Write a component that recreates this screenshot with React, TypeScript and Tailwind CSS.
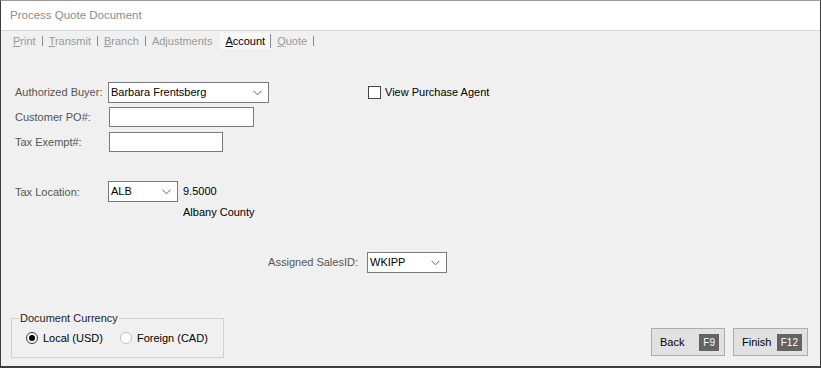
import React from "react";

const tabs = [
  { key: "P", rest: "rint", sep: true },
  { key: "T", rest: "ransmit", sep: true },
  { key: "B", rest: "ranch", sep: true },
  { key: "", rest: "Adjustments", sep: false },
];

function Chevron() {
  return (
    <svg width="9" height="6" viewBox="0 0 9 6" fill="none" className="shrink-0">
      <path d="M0.5 0.8 L4.5 4.8 L8.5 0.8" stroke="#606060" strokeWidth="1" />
    </svg>
  );
}

function Combo({ value, width }: { value: string; width: string }) {
  return (
    <div
      className={`flex h-[21px] items-center justify-between border border-[#7a7a7a] bg-white pl-[2px] pr-[6px] text-black ${width}`}
    >
      <span>{value}</span>
      <Chevron />
    </div>
  );
}

function FKey({ label }: { label: string }) {
  return (
    <span className="flex h-[17px] items-center bg-[#636363] px-[4px] text-[10px] text-white">
      {label}
    </span>
  );
}

export default function App() {
  return (
    <div className="flex h-[368px] w-[821px] flex-col border-x border-t border-b-2 border-x-[#3c3c3c] border-t-[#9a9a9a] border-b-[#3c3c3c] bg-[#f0f0f0] font-['Liberation_Sans',Arial,sans-serif] text-[11px] text-[#555]">
      {/* Title */}
      <div className="flex h-[30px] items-center border-b border-[#d4d4d4] bg-white pl-[9px] pt-[1px] text-[11.5px] text-[#8c8c8c]">
        Process Quote Document
      </div>

      {/* Tabs */}
      <div className="flex h-[18px] items-center pl-[12px] pt-[2px] text-[11px] text-[#9a9a9a]">
        {tabs.map((t) => (
          <div key={t.rest} className="flex items-center">
            <span>
              <span className="underline">{t.key}</span>
              {t.rest}
            </span>
            {t.sep && <span className="mx-[6px] h-[10px] w-px bg-[#8a8a8a]" />}
          </div>
        ))}
        <div className="ml-[8px] flex h-full items-center bg-[#f8f8f8] px-[5px] text-black">
          <span className="underline">A</span>ccount
        </div>
        <span className="mr-[6px] h-[14px] w-px bg-[#8a8a8a]" />
        <span>
          <span className="underline">Q</span>uote
        </span>
        <span className="ml-[6px] h-[10px] w-px bg-[#8a8a8a]" />
      </div>

      {/* Body */}
      <div className="flex flex-1 flex-col pl-[14px] pr-[12px] pb-[8px]">
        <div className="mt-[33px] flex items-center">
          <span className="w-[93px]">Authorized Buyer:</span>
          <Combo value="Barbara Frentsberg" width="w-[161px]" />
          <div className="ml-[99px] flex items-center gap-[4px] text-black">
            <span className="h-[13px] w-[13px] border border-[#444] bg-white" />
            <span>View Purchase Agent</span>
          </div>
        </div>

        <div className="mt-[4px] flex items-center">
          <span className="w-[94px]">Customer PO#:</span>
          <div className="h-[20px] w-[145px] border border-[#7a7a7a] bg-white" />
        </div>

        <div className="mt-[5px] flex items-center">
          <span className="w-[94px]">Tax Exempt#:</span>
          <div className="h-[20px] w-[114px] border border-[#7a7a7a] bg-white" />
        </div>

        <div className="mt-[29px] flex items-start">
          <span className="mt-[3px] w-[93px]">Tax Location:</span>
          <Combo value="ALB" width="w-[70px]" />
          <div className="ml-[5px] mt-[2px] flex flex-col gap-[4px] text-black">
            <span>9.5000</span>
            <span>Albany County</span>
          </div>
        </div>

        <div className="mt-[32px] flex items-center">
          <span className="w-[352px] pr-[9px] text-right">Assigned SalesID:</span>
          <Combo value="WKIPP" width="w-[80px]" />
        </div>

        {/* Bottom */}
        <div className="mt-auto flex items-end justify-between">
          <fieldset className="-ml-[4px] h-[48px] w-[213px] border border-[#d0d0d0] px-[14px]">
            <legend className="ml-[-7px] px-[1px] text-[#222]">Document Currency</legend>
            <div className="mt-[3px] flex items-center whitespace-nowrap text-black">
              <span className="flex h-[12px] w-[12px] shrink-0 items-center justify-center rounded-full border border-[#333] bg-white">
                <span className="h-[6px] w-[6px] rounded-full bg-black" />
              </span>
              <span className="ml-[5px]">Local (USD)</span>
              <span className="ml-[17px] h-[12px] w-[12px] shrink-0 rounded-full border border-[#c0c0c0] bg-white" />
              <span className="ml-[5px]">Foreign (CAD)</span>
            </div>
          </fieldset>

          <div className="mb-[2px] flex gap-[8px] text-black">
            <div className="flex h-[28px] w-[74px] items-center justify-between border border-[#adadad] bg-[#e1e1e1] pl-[8px] pr-[5px]">
              <span>Back</span>
              <FKey label="F9" />
            </div>
            <div className="flex h-[28px] w-[75px] items-center justify-between border border-[#adadad] bg-[#e1e1e1] pl-[8px] pr-[5px]">
              <span>Finish</span>
              <FKey label="F12" />
            </div>
          </div>
        </div>
      </div>
    </div>
  );
}
